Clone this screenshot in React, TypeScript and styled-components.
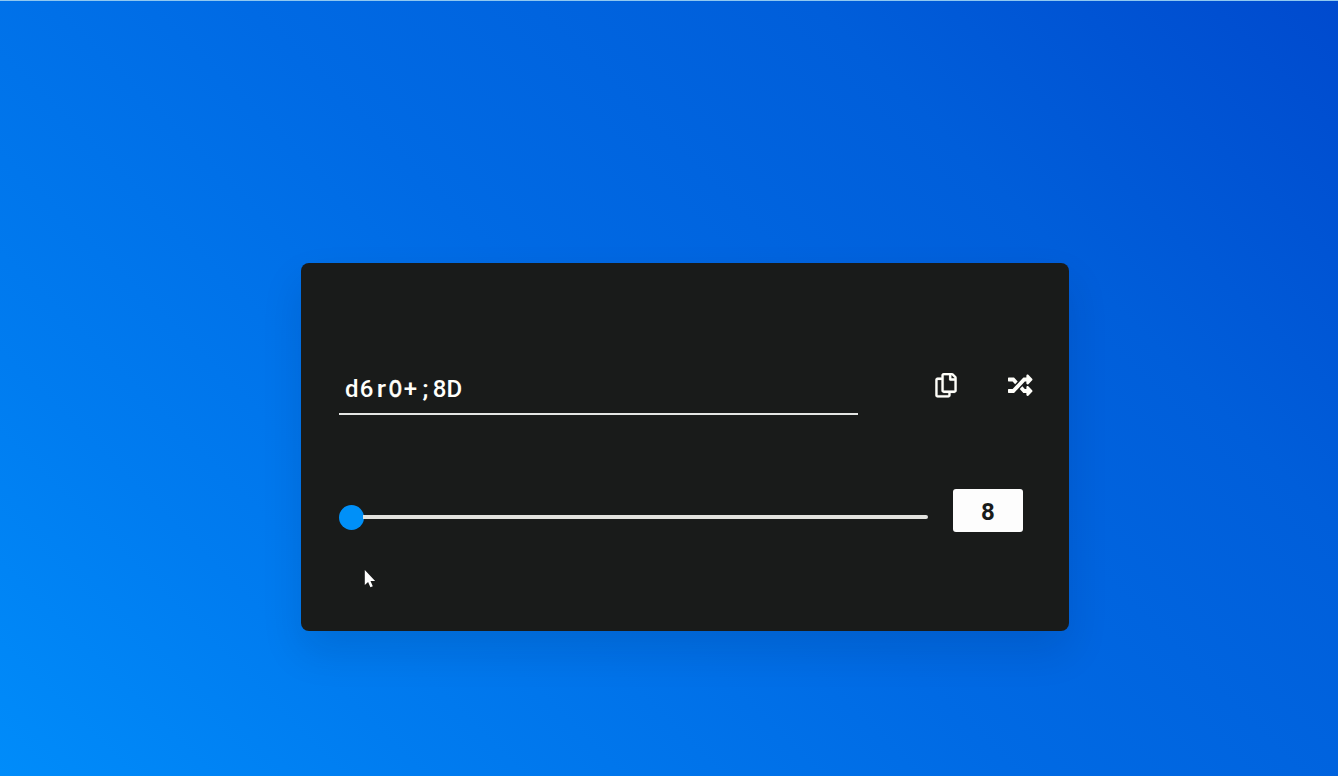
import React from "react";
import styled, { createGlobalStyle } from "styled-components";
import { FaRegCopy, FaRandom } from "react-icons/fa";

const GlobalStyle = createGlobalStyle`
  * { box-sizing: border-box; }
  body { margin: 0; font-family: Roboto, sans-serif; }
`;

const Page = styled.main`
  position: relative;
  width: 100%;
  height: 776px;
  padding: 262px 0 0 301px;
  overflow: hidden;
  border-top: 1px solid #90c8f0;
  background: linear-gradient(45deg, #008cfa 0%, #007cf0 20%, #006ae4 48%, #005eda 75%, #004ace 100%);
`;

const Card = styled.section`
  width: 768px;
  height: 368px;
  padding: 105px 36px 0 38px;
  border-radius: 8px;
  background: #191b1a;
  box-shadow: 0 20px 40px rgba(0, 15, 40, 0.12);
`;

const PasswordRow = styled.div`
  display: flex;
  align-items: flex-start;
  height: 121px;
`;

const Password = styled.div`
  display: flex;
  width: 519px;
  height: 47px;
  padding-left: 5.5px;
  border-bottom: 2px solid #e4e6e4;
  color: #fffffa;
  font-size: 24px;
  font-weight: 500;
  line-height: 43px;
`;

const Glyph = styled.span<{ $stretch: number }>`
  display: inline-flex;
  justify-content: center;
  width: 14.65px;
  transform: scaleX(${(p) => p.$stretch});
  -webkit-text-stroke: ${(p) => (p.$stretch < 1 ? "0.5px" : "0")};
`;

const IconButton = styled.button<{ $gap: number }>`
  display: flex;
  margin: 5px 0 0 ${(p) => p.$gap}px;
  padding: 0;
  border: 0;
  background: none;
  color: #fffffa;
  font-size: 24.5px;
`;

const CopyIcon = styled(FaRegCopy)`
  width: 22px;
  stroke: currentColor;
  stroke-width: 4px;
`;

const SliderRow = styled.div`
  display: flex;
  align-items: flex-start;
`;

const Slider = styled.div`
  display: flex;
  align-items: center;
  width: 589px;
  height: 26px;
  margin-top: 15px;
`;

const Thumb = styled.div`
  width: 25px;
  height: 25px;
  border-radius: 50%;
  background: #0090f8;
`;

const Track = styled.div`
  flex: 1;
  height: 4px;
  margin-left: -1px;
  border-radius: 0 2px 2px 0;
  background: #e2e2de;
`;

const LengthBox = styled.div`
  display: flex;
  align-items: center;
  justify-content: center;
  width: 70px;
  height: 43px;
  margin-left: 25px;
  padding-top: 2px;
  border-radius: 3px;
  background: #fdfdfd;
  color: #191b1a;
  font-size: 24px;
  font-weight: 700;
`;

const Pointer = styled.svg`
  position: absolute;
  left: 364px;
  top: 568px;
`;

const stretch: Record<string, number> = { O: 0.8, r: 1.1, ";": 1.1 };

export default function App() {
  return (
    <>
      <GlobalStyle />
      <Page>
        <Card>
          <PasswordRow>
            <Password>
              {Array.from("d6rO+;8D").map((c, i) => (
                <Glyph key={i} $stretch={stretch[c] ?? 1}>{c}</Glyph>
              ))}
            </Password>
            <IconButton $gap={77} aria-label="Copy"><CopyIcon /></IconButton>
            <IconButton $gap={51} aria-label="Generate"><FaRandom /></IconButton>
          </PasswordRow>
          <SliderRow>
            <Slider>
              <Thumb />
              <Track />
            </Slider>
            <LengthBox>8</LengthBox>
          </SliderRow>
        </Card>
        <Pointer width="13" height="20" viewBox="0 0 13 20">
          <path d="M.8 1v15l3.3-3 2.3 5.2 2.4-1-2.3-5.2h4.6z" fill="#fff" />
        </Pointer>
      </Page>
    </>
  );
}
